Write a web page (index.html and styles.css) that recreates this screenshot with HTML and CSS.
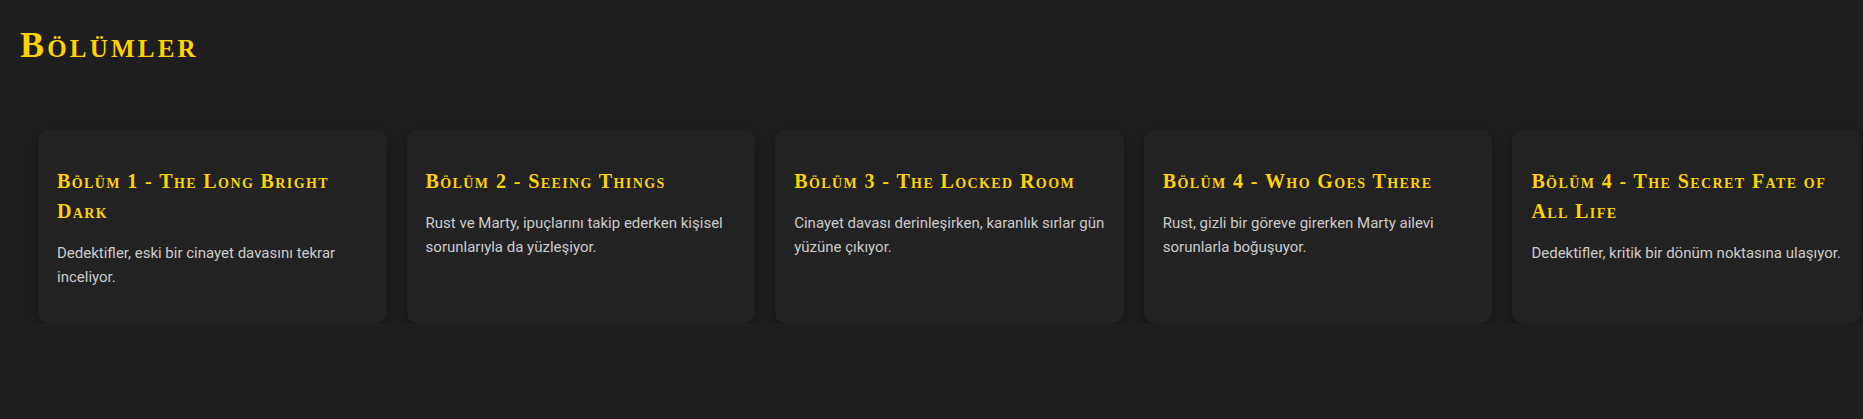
FILE: index.html
```html
<!DOCTYPE html>
<html lang="tr">
<head>
<meta charset="utf-8">
<title>Bölümler</title>
<link rel="stylesheet" href="styles.css">
</head>
<body>
<main class="page">
  <h1 class="page-title" lang="en">Bölümler</h1>
  <section class="episodes">
    <article class="card">
      <h3 class="card-title" lang="en">Bölüm 1 - The Long Bright Dark</h3>
      <p class="card-text">Dedektifler, eski bir cinayet davasını tekrar inceliyor.</p>
    </article>
    <article class="card">
      <h3 class="card-title" lang="en">Bölüm 2 - Seeing Things</h3>
      <p class="card-text">Rust ve Marty, ipuçlarını takip ederken kişisel sorunlarıyla da yüzleşiyor.</p>
    </article>
    <article class="card">
      <h3 class="card-title" lang="en">Bölüm 3 - The Locked Room</h3>
      <p class="card-text">Cinayet davası derinleşirken, karanlık sırlar gün yüzüne çıkıyor.</p>
    </article>
    <article class="card">
      <h3 class="card-title" lang="en">Bölüm 4 - Who Goes There</h3>
      <p class="card-text">Rust, gizli bir göreve girerken Marty ailevi sorunlarla boğuşuyor.</p>
    </article>
    <article class="card">
      <h3 class="card-title" lang="en">Bölüm 4 - The Secret Fate of All Life</h3>
      <p class="card-text">Dedektifler, kritik bir dönüm noktasına ulaşıyor.</p>
    </article>
  </section>
</main>
</body>
</html>
```
FILE: styles.css
```css
html, body {
  margin: 0;
  padding: 0;
  background: #1e1e1e;
}

body {
  font-family: Roboto, "Liberation Sans", sans-serif;
  color: #cccccc;
}

.page {
  padding: 25px 2px 0 20px;
}

.page-title {
  margin: 0;
  font-family: "Liberation Serif", serif;
  font-variant: small-caps;
  font-weight: 700;
  font-size: 36px;
  line-height: 41px;
  letter-spacing: 3.2px;
  color: #ffd200;
}

.episodes {
  display: flex;
  gap: 20px;
  margin-top: 64px;
  padding-left: 18px;
}

.card {
  flex: 1 1 0;
  min-width: 0;
  background: #222222;
  border-radius: 10px;
  padding: 19px;
  box-shadow: 0 4px 10px rgba(0, 0, 0, 0.35);
}

.card-title {
  margin: 17px 0 0;
  font-family: "Liberation Serif", serif;
  font-variant: small-caps;
  font-weight: 700;
  font-size: 20px;
  line-height: 30px;
  letter-spacing: 1.4px;
  color: #ffd200;
}

.card-text {
  margin: 15px 0;
  font-size: 15px;
  line-height: 24px;
  color: #cccccc;
}
```
